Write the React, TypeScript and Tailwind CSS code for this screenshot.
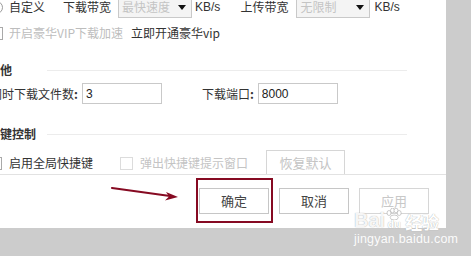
import React from 'react';

const font = "font-['Noto_Sans_CJK_SC','Noto_Sans',sans-serif]";

const Select = ({ value }: { value: string }) => (
  <div className="h-[22px] w-[74px] border border-[#c9c9c9] bg-[#f4f4f4] flex items-center pl-[3px] pr-[5px]">
    <span className="text-[12px] text-[#c4c4c4] flex-1 leading-none">{value}</span>
    <svg width="8" height="5" viewBox="0 0 8 5"><path d="M0 0 L8 0 L4 5 Z" fill="#111" /></svg>
  </div>
);

const Box = ({ disabled }: { disabled?: boolean }) => (
  <div className={`w-[13px] h-[13px] border bg-white ${disabled ? 'border-[#dcdcdc]' : 'border-[#a9a9a9]'}`} />
);

const Button = ({ label, disabled }: { label: string; disabled?: boolean }) => (
  <button
    className={`w-[70px] h-[26px] border bg-white text-[13px] ${
      disabled ? 'border-[#d6d6d6] text-[#c8c8c8]' : 'border-[#c6c6c6] text-[#444]'
    }`}
  >
    {label}
  </button>
);

const Section = ({ title, lineFrom }: { title: string; lineFrom: string }) => (
  <div className="flex items-center h-[16px]">
    <span className={`text-[12px] font-bold text-[#333] whitespace-nowrap ${lineFrom}`}>{title}</span>
    <div className="h-px bg-[#ececec] w-[360px] ml-auto mr-[39px]" />
  </div>
);

export default function App() {
  return (
    <div className={`relative w-[471px] h-[256px] bg-[#cccccc] overflow-hidden ${font}`}>
      <div className="w-[446px] h-[228px] bg-white flex flex-col overflow-hidden text-[#333]">
        <div className="h-[174px] overflow-hidden flex flex-col">
          {/* bandwidth row */}
          <div className="-mt-[4px] h-[22px] flex items-center text-[12px] whitespace-nowrap">
            <div className="-ml-[10px] w-[13px] h-[13px] rounded-full border border-[#9a9a9a]" />
            <span className="ml-[6px]">自定义</span>
            <span className="ml-[18px]">下载带宽</span>
            <div className="ml-[7px]"><Select value="最快速度" /></div>
            <span className="ml-[3px] font-['Liberation_Sans',sans-serif]">KB/s</span>
            <span className="ml-[20px]">上传带宽</span>
            <div className="ml-[8px]"><Select value="无限制" /></div>
            <span className="ml-[4px] font-['Liberation_Sans',sans-serif]">KB/s</span>
          </div>

          <div className="mt-[7px] h-[16px] flex items-center text-[12px] whitespace-nowrap">
            <div className="-ml-[10px]"><Box /></div>
            <span className="ml-[6px] text-[#bdbdbd]">开启豪华VIP下载加速</span>
            <span className="ml-[8px] text-[#333]">立即开通豪华vip</span>
          </div>

          <div className="mt-[21px]">
            <Section title="其他" lineFrom="-ml-[12px]" />
          </div>

          <div className="mt-[5px] h-[21px] flex items-center text-[12px] whitespace-nowrap">
            <span className="-ml-[10px]">同时下载文件数<b>:</b></span>
            <input
              readOnly
              value="3"
              className="ml-[4px] w-[80px] h-[21px] border border-[#c9c9c9] px-[3px] text-[12px] text-[#222] outline-none font-['Liberation_Sans',sans-serif]"
            />
            <span className="ml-[40px]">下载端口<b>:</b></span>
            <input
              readOnly
              value="8000"
              className="ml-[4px] w-[80px] h-[21px] border border-[#c9c9c9] px-[3px] text-[12px] text-[#222] outline-none font-['Liberation_Sans',sans-serif]"
            />
          </div>

          <div className="mt-[22px]">
            <Section title="快捷键控制" lineFrom="-ml-[24px]" />
          </div>

          <div className="mt-[8px] h-[26px] flex items-center text-[12px] whitespace-nowrap">
            <div className="-ml-[11px]"><Box /></div>
            <span className="ml-[7px]">启用全局快捷键</span>
            <div className="ml-[27px]"><Box disabled /></div>
            <span className="ml-[7px] text-[#c4c4c4]">弹出快捷键提示窗口</span>
            <div className="ml-[18px] self-start">
              <button className="w-[79px] h-[30px] border border-[#d6d6d6] bg-white text-[13px] text-[#c4c4c4] pb-[4px]">
                恢复默认
              </button>
            </div>
          </div>
        </div>
        <div className="h-px bg-[#e2e2e2]" />

        <div className="flex justify-end gap-[10px] pr-[17px] pt-[13px]">
          <Button label="确定" />
          <Button label="取消" />
          <Button label="应用" disabled />
        </div>
      </div>

      {/* annotation box */}
      <div className="absolute left-[196px] top-[178px] w-[77px] h-[45px] border-[2px] border-[#860a22]" />
      {/* annotation arrow */}
      <svg className="absolute left-0 top-0" width="471" height="256" viewBox="0 0 471 256">
        <line x1="112" y1="188" x2="170" y2="196" stroke="#860a22" strokeWidth="2.2" strokeLinecap="round" />
        <path d="M178 197 L166 192 L169 196.5 L165 200.5 Z" fill="#860a22" />
      </svg>

      {/* watermark */}
      <div className="absolute left-[354px] top-[204px] flex flex-col items-start text-white">
        <div className="flex items-end h-[26px]">
          <span className="text-[20px] leading-none font-bold font-['Liberation_Sans',sans-serif] [text-shadow:0_0_1px_#9a9a9a] text-white/90">Bai</span>
          <div className="relative w-[18px] h-[24px] flex flex-col items-center justify-end">
            <svg width="16" height="12" viewBox="0 0 16 12" className="mb-[1px]">
              <g fill="#fff" stroke="#aaa" strokeWidth="0.6">
                <ellipse cx="3" cy="5" rx="2" ry="2.5" />
                <ellipse cx="6.5" cy="2.5" rx="2" ry="2.3" />
                <ellipse cx="10" cy="2.5" rx="2" ry="2.3" />
                <ellipse cx="13.2" cy="5" rx="2" ry="2.5" />
                <ellipse cx="8.2" cy="9.5" rx="4" ry="2.5" />
              </g>
            </svg>
            <span className="text-[11px] leading-none font-bold font-['Liberation_Sans',sans-serif] [text-shadow:0_0_1px_#9a9a9a] -mt-[2px]">du</span>
          </div>
          <span className="ml-[2px] text-[17px] leading-none font-bold [text-shadow:0_0_1px_#9a9a9a]">经验</span>
        </div>
        <span className="mt-[3px] text-[12.5px] leading-none font-['Liberation_Sans',sans-serif] text-white/95 tracking-[0.2px]">
          jingyan.baidu.com
        </span>
      </div>
    </div>
  );
}
